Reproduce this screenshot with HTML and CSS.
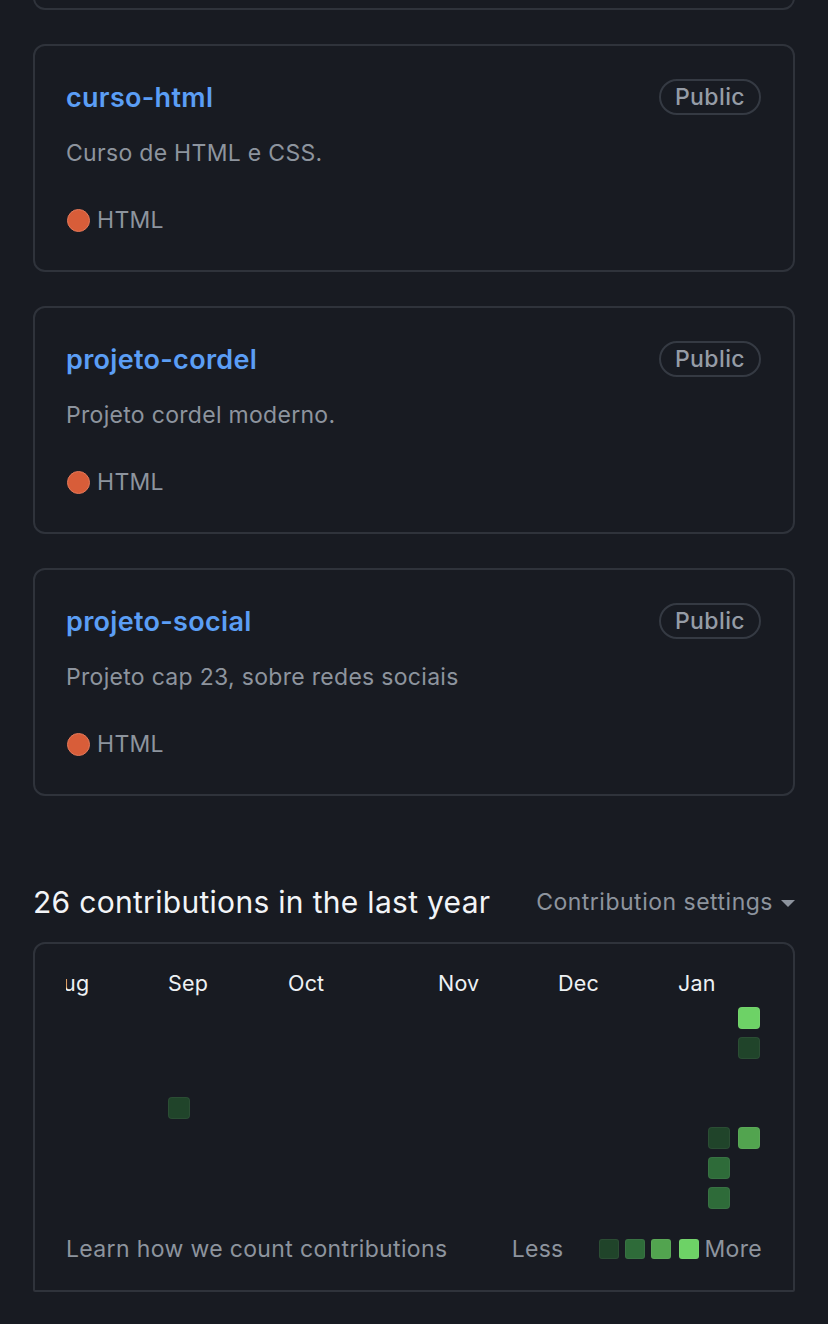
FILE: index.html
```html
<!DOCTYPE html>
<html lang="pt">
<head>
<meta charset="utf-8">
<title>Repositories</title>
<link rel="stylesheet" href="styles.css">
</head>
<body>
<main class="page">
  <div class="card card-partial"></div>

  <section class="card repo">
    <div class="repo-head">
      <a class="repo-name" href="#">curso-html</a>
      <span class="badge">Public</span>
    </div>
    <p class="repo-desc">Curso de HTML e CSS.</p>
    <div class="repo-lang"><span class="lang-dot"></span><span>HTML</span></div>
  </section>

  <section class="card repo">
    <div class="repo-head">
      <a class="repo-name" href="#">projeto-cordel</a>
      <span class="badge">Public</span>
    </div>
    <p class="repo-desc">Projeto cordel moderno.</p>
    <div class="repo-lang"><span class="lang-dot"></span><span>HTML</span></div>
  </section>

  <section class="card repo">
    <div class="repo-head">
      <a class="repo-name" href="#">projeto-social</a>
      <span class="badge">Public</span>
    </div>
    <p class="repo-desc">Projeto cap 23, sobre redes sociais</p>
    <div class="repo-lang"><span class="lang-dot"></span><span>HTML</span></div>
  </section>

  <div class="contrib-head">
    <h2 class="contrib-title">26 contributions in the last year</h2>
    <button class="contrib-settings">Contribution settings <span class="caret"></span></button>
  </div>

  <section class="card graph">
    <div class="graph-clip">
      <div class="graph-grid">
        <span class="month" style="grid-column: 1">Aug</span>
        <span class="month" style="grid-column: 5">Sep</span>
        <span class="month" style="grid-column: 9">Oct</span>
        <span class="month" style="grid-column: 14">Nov</span>
        <span class="month" style="grid-column: 18">Dec</span>
        <span class="month" style="grid-column: 22">Jan</span>

        <span class="day l4" style="grid-column: 24; grid-row: 2"></span>
        <span class="day l1" style="grid-column: 24; grid-row: 3"></span>
        <span class="day l1" style="grid-column: 5; grid-row: 5"></span>
        <span class="day l1" style="grid-column: 23; grid-row: 6"></span>
        <span class="day l3" style="grid-column: 24; grid-row: 6"></span>
        <span class="day l2" style="grid-column: 23; grid-row: 7"></span>
        <span class="day l2" style="grid-column: 23; grid-row: 8"></span>
      </div>
    </div>
    <div class="graph-foot">
      <a class="learn" href="#">Learn how we count contributions</a>
      <div class="legend">
        <span class="legend-label less">Less</span>
        <span class="legend-box l1"></span>
        <span class="legend-box l2"></span>
        <span class="legend-box l3"></span>
        <span class="legend-box l4 last"></span>
        <span class="legend-label">More</span>
      </div>
    </div>
  </section>
</main>
</body>
</html>
```

FILE: styles.css
```css
* { box-sizing: border-box; }

html, body {
  margin: 0;
  padding: 0;
  background: #181b22;
}

body {
  font-family: Inter, "Noto Sans", "Liberation Sans", sans-serif;
  color: #f0f3f6;
  -webkit-font-smoothing: antialiased;
}

.page {
  width: 828px;
  padding: 0 33px 40px 33px;
  overflow: hidden;
}

.card {
  border: 2px solid #2f333b;
  border-radius: 12px;
  background: #181b22;
}

.card-partial {
  height: 60px;
  margin-top: -50px;
}

.repo {
  margin-top: 34px;
  height: 228px;
  padding: 32px 32px 0 32px;
}

.repo-head {
  display: flex;
  align-items: center;
  justify-content: space-between;
  height: 38px;
}

.repo-name {
  color: #5b9ef5;
  font-weight: 600;
  font-size: 27px;
  letter-spacing: 0.3px;
  text-decoration: none;
  margin-left: -1px;
}

.badge {
  display: inline-flex;
  align-items: center;
  height: 36px;
  padding: 0 14px;
  border: 2px solid #353a43;
  border-radius: 18px;
  color: #959ca6;
  font-size: 23px;
  letter-spacing: 0.4px;
  font-weight: 500;
}

.repo-desc {
  margin: 20px 0 0 -1px;
  line-height: 34px;
  font-size: 23px;
  letter-spacing: 0.3px;
  color: #8d949e;
}

.repo-lang {
  margin-top: 34px;
  display: flex;
  align-items: center;
  height: 32px;
  font-size: 23px;
  letter-spacing: 0.3px;
  color: #8d949e;
}

.lang-dot {
  width: 23px;
  height: 23px;
  border-radius: 50%;
  background: #d85d39;
  border: 1.5px solid #e3795a;
  margin-right: 7px;
}

.contrib-head {
  margin-top: 86px;
  display: flex;
  align-items: center;
  justify-content: space-between;
  height: 40px;
}

.contrib-title {
  margin: 0;
  font-size: 30px;
  font-weight: 400;
  color: #f2f4f7;
  letter-spacing: 0.3px;
}

.contrib-settings {
  background: none;
  border: 0;
  padding: 0;
  font-family: inherit;
  font-size: 23px;
  letter-spacing: 0.5px;
  color: #8d949e;
  display: flex;
  align-items: center;
  gap: 8px;
}

.caret {
  width: 0;
  height: 0;
  border-left: 7px solid transparent;
  border-right: 7px solid transparent;
  border-top: 7px solid #8d949e;
  margin-top: 2px;
}

.graph {
  margin-top: 20px;
  border-radius: 12px 12px 2px 2px;
  padding: 24px 31px 25px 31px;
}

.graph-clip {
  overflow: hidden;
}

.graph-grid {
  margin-left: -18px;
  display: grid;
  grid-template-columns: repeat(24, 22px);
  grid-template-rows: 31px repeat(7, 22px);
  column-gap: 8px;
  row-gap: 8px;
}

.month {
  grid-row: 1;
  font-size: 21.5px;
  letter-spacing: 0.2px;
  line-height: 30px;
  color: #eef1f4;
  white-space: nowrap;
}

.day {
  width: 22px;
  height: 22px;
  border-radius: 4px;
  border: 1px solid rgba(255, 255, 255, 0.05);
}

.l1 { background: #20442a; }
.l2 { background: #2e6b39; }
.l3 { background: #52a44f; }
.l4 { background: #6dd266; }

.graph-foot {
  margin-top: 24px;
  display: flex;
  align-items: center;
  justify-content: space-between;
  height: 32px;
}

.learn {
  color: #8d949e;
  text-decoration: none;
  font-size: 23px;
  letter-spacing: 0.35px;
}

.legend {
  display: flex;
  align-items: center;
  gap: 6px;
  font-size: 23px;
  letter-spacing: 0.3px;
  color: #8d949e;
}

.legend-label.less {
  margin-right: 29px;
}

.legend-box {
  width: 20px;
  height: 20px;
  border-radius: 3px;
  border: 1px solid rgba(255, 255, 255, 0.05);
}

.legend-box.last {
  margin-left: 2px;
}
```
